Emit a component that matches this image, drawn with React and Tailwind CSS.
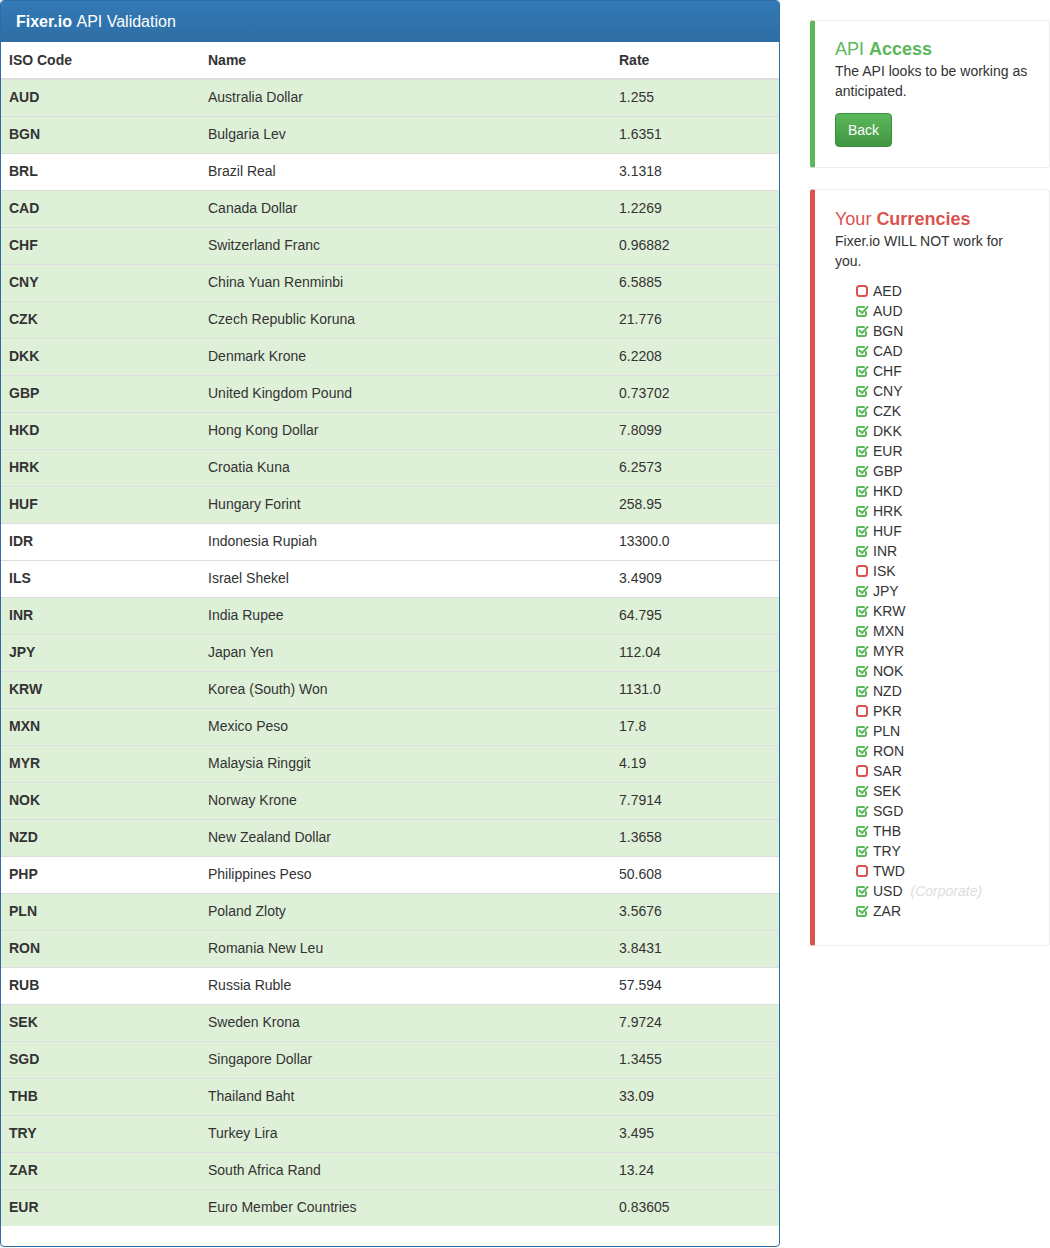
const rows = [
["AUD","Australia Dollar","1.255",1],["BGN","Bulgaria Lev","1.6351",1],["BRL","Brazil Real","3.1318",0],["CAD","Canada Dollar","1.2269",1],["CHF","Switzerland Franc","0.96882",1],["CNY","China Yuan Renminbi","6.5885",1],["CZK","Czech Republic Koruna","21.776",1],["DKK","Denmark Krone","6.2208",1],["GBP","United Kingdom Pound","0.73702",1],["HKD","Hong Kong Dollar","7.8099",1],["HRK","Croatia Kuna","6.2573",1],["HUF","Hungary Forint","258.95",1],["IDR","Indonesia Rupiah","13300.0",0],["ILS","Israel Shekel","3.4909",0],["INR","India Rupee","64.795",1],["JPY","Japan Yen","112.04",1],["KRW","Korea (South) Won","1131.0",1],["MXN","Mexico Peso","17.8",1],["MYR","Malaysia Ringgit","4.19",1],["NOK","Norway Krone","7.7914",1],["NZD","New Zealand Dollar","1.3658",1],["PHP","Philippines Peso","50.608",0],["PLN","Poland Zloty","3.5676",1],["RON","Romania New Leu","3.8431",1],["RUB","Russia Ruble","57.594",0],["SEK","Sweden Krona","7.9724",1],["SGD","Singapore Dollar","1.3455",1],["THB","Thailand Baht","33.09",1],["TRY","Turkey Lira","3.495",1],["ZAR","South Africa Rand","13.24",1],["EUR","Euro Member Countries","0.83605",1]];
const cur = [["AED",0],["AUD",1],["BGN",1],["CAD",1],["CHF",1],["CNY",1],["CZK",1],["DKK",1],["EUR",1],["GBP",1],["HKD",1],["HRK",1],["HUF",1],["INR",1],["ISK",0],["JPY",1],["KRW",1],["MXN",1],["MYR",1],["NOK",1],["NZD",1],["PKR",0],["PLN",1],["RON",1],["SAR",0],["SEK",1],["SGD",1],["THB",1],["TRY",1],["TWD",0],["USD",1],["ZAR",1]];
function Check(){return <svg width="14" height="14" viewBox="0 0 14 14" fill="none" stroke="#5cb85c" strokeWidth="2" strokeLinecap="round" strokeLinejoin="round"><path d="M11 8v2.5a1.5 1.5 0 0 1-1.5 1.5h-6A1.5 1.5 0 0 1 2 10.5v-6A1.5 1.5 0 0 1 3.5 3H9"/><path d="M4.5 6.5l2.5 2.5L12.5 3"/></svg>}
function Box(){return <svg width="14" height="14" viewBox="0 0 14 14" fill="none" stroke="#d9534f" strokeWidth="2"><rect x="2" y="2" width="10" height="10" rx="2.5"/></svg>}
export default function App(){
return <div className="flex gap-[30px] bg-white text-[14px] text-[#333]" style={{fontFamily:'"Liberation Sans", Arial, sans-serif'}}>
<div className="w-[780px] shrink-0 border border-[#2e6da4] rounded-[4px] overflow-hidden pb-[20px]">
<div className="h-[41px] flex items-center px-[15px] text-white text-[16px] bg-gradient-to-b from-[#337ab7] to-[#2e6da4]"><b>Fixer.io</b>&nbsp;API Validation</div>
<table className="w-full border-collapse">
<thead><tr className="h-[37px] border-b-2 border-[#ddd] font-bold text-left"><th className="px-[8px] w-[199px]">ISO Code</th><th className="px-[8px] w-[411px]">Name</th><th className="px-[8px]">Rate</th></tr></thead>
<tbody>{rows.map(r=><tr key={r[0]} className={"h-[37px] border-t border-[#ddd] "+(r[3]?"bg-[#dff0d8]":"bg-white")}><td className="px-[8px] font-bold">{r[0]}</td><td className="px-[8px]">{r[1]}</td><td className="px-[8px]">{r[2]}</td></tr>)}</tbody>
</table>
</div>
<div className="flex-1 pt-[20px] flex flex-col gap-[21px]">
<div className="border border-[#eee] border-l-[5px] border-l-[#5cb85c] rounded-[3px] px-[20px] pt-[18px] pb-[20px]">
<div className="text-[18px] leading-[20px] text-[#5cb85c]">API <b>Access</b></div>
<p className="leading-[20px] mt-[2px]">The API looks to be working as anticipated.</p>
<button className="mt-[12px] h-[34px] px-[12px] rounded-[4px] text-white bg-gradient-to-b from-[#5cb85c] to-[#419641] border border-[#3e8f3e]">Back</button>
</div>
<div className="border border-[#eee] border-l-[5px] border-l-[#d9534f] rounded-[3px] px-[20px] pt-[19px] pb-[24px]">
<div className="text-[18px] leading-[20px] text-[#d9534f]">Your <b>Currencies</b></div>
<p className="leading-[20px] mt-[2px]">Fixer.io WILL NOT work for you.</p>
<ul className="mt-[10px] pl-[20px]">{cur.map(c=><li key={c[0]} className="h-[20px] flex items-center gap-[4px]">{c[1]?<Check/>:<Box/>}<span>{c[0]}</span>{c[0]==="USD"&&<i className="text-[#ddd] ml-[4px]">(Corporate)</i>}</li>)}</ul>
</div>
</div>
</div>
}
